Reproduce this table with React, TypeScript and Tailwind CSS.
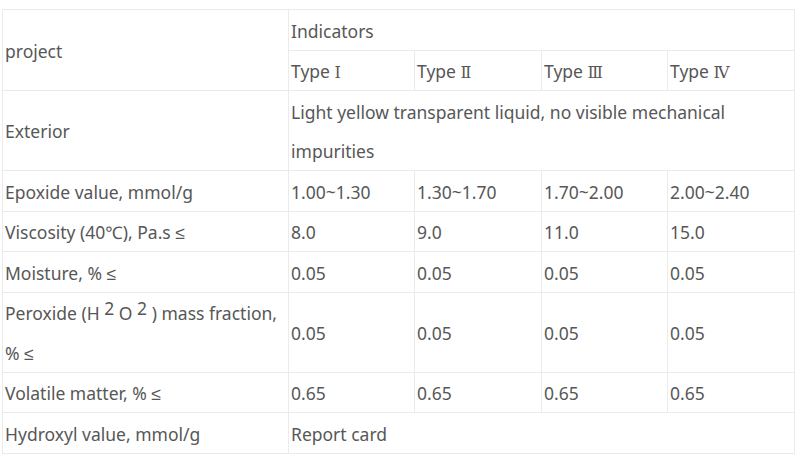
import React from 'react';

const cell = "border border-[#ebebeb] px-[2px] align-middle text-left font-normal";

const Le = () => <span className="font-['Liberation_Sans',sans-serif] leading-[0]">≤</span>;
const Num = ({ n }: { n: string }) => <span className="font-['DejaVu_Serif',serif] text-[16px] leading-[0]">{n}</span>;
const Sup = ({ n }: { n: string }) => <span className="relative top-[-5px]">{n}</span>;

const Cell = ({ children, ...rest }: React.TdHTMLAttributes<HTMLTableCellElement>) => (
  <td className={cell} {...rest}>
    <div className="relative top-[1.5px]">{children}</div>
  </td>
);

interface Row {
  label: React.ReactNode;
  values: string[];
}

const rows: Row[] = [
  { label: "Epoxide value, mmol/g", values: ["1.00~1.30", "1.30~1.70", "1.70~2.00", "2.00~2.40"] },
  { label: <>Viscosity (40℃), Pa.s <Le /></>, values: ["8.0", "9.0", "11.0", "15.0"] },
  { label: <>Moisture, % <Le /></>, values: ["0.05", "0.05", "0.05", "0.05"] },
  {
    label: (
      <>
        Peroxide (H <Sup n="2" /> O <Sup n="2" /> ) mass fraction, % <Le />
      </>
    ),
    values: ["0.05", "0.05", "0.05", "0.05"],
  },
  { label: <>Volatile matter, % <Le /></>, values: ["0.65", "0.65", "0.65", "0.65"] },
];

export default function App() {
  return (
    <div className="w-[797px] h-[462px] bg-white overflow-hidden pt-[9px] pl-[2px] text-[#575757] text-[17.5px] leading-[39.5px] font-['Noto_Sans','Noto_Sans_CJK_SC',sans-serif]">
      <table className="border-collapse table-fixed w-[792px]">
        <colgroup>
          <col className="w-[286px]" />
          <col className="w-[126px]" />
          <col className="w-[127px]" />
          <col className="w-[126px]" />
          <col className="w-[127px]" />
        </colgroup>
        <tbody>
          <tr>
            <Cell rowSpan={2}>project</Cell>
            <Cell colSpan={4}>Indicators</Cell>
          </tr>
          <tr>
            <Cell>Type <Num n="Ⅰ" /></Cell>
            <Cell>Type <Num n="Ⅱ" /></Cell>
            <Cell>Type <Num n="Ⅲ" /></Cell>
            <Cell>Type <Num n="Ⅳ" /></Cell>
          </tr>
          <tr>
            <Cell>Exterior</Cell>
            <Cell colSpan={4}>Light yellow transparent liquid, no visible mechanical impurities</Cell>
          </tr>
          {rows.map((r, i) => (
            <tr key={i}>
              <Cell>{r.label}</Cell>
              {r.values.map((v, j) => (
                <Cell key={j}>{v}</Cell>
              ))}
            </tr>
          ))}
          <tr>
            <Cell>Hydroxyl value, mmol/g</Cell>
            <Cell colSpan={4}>Report card</Cell>
          </tr>
        </tbody>
      </table>
    </div>
  );
}
